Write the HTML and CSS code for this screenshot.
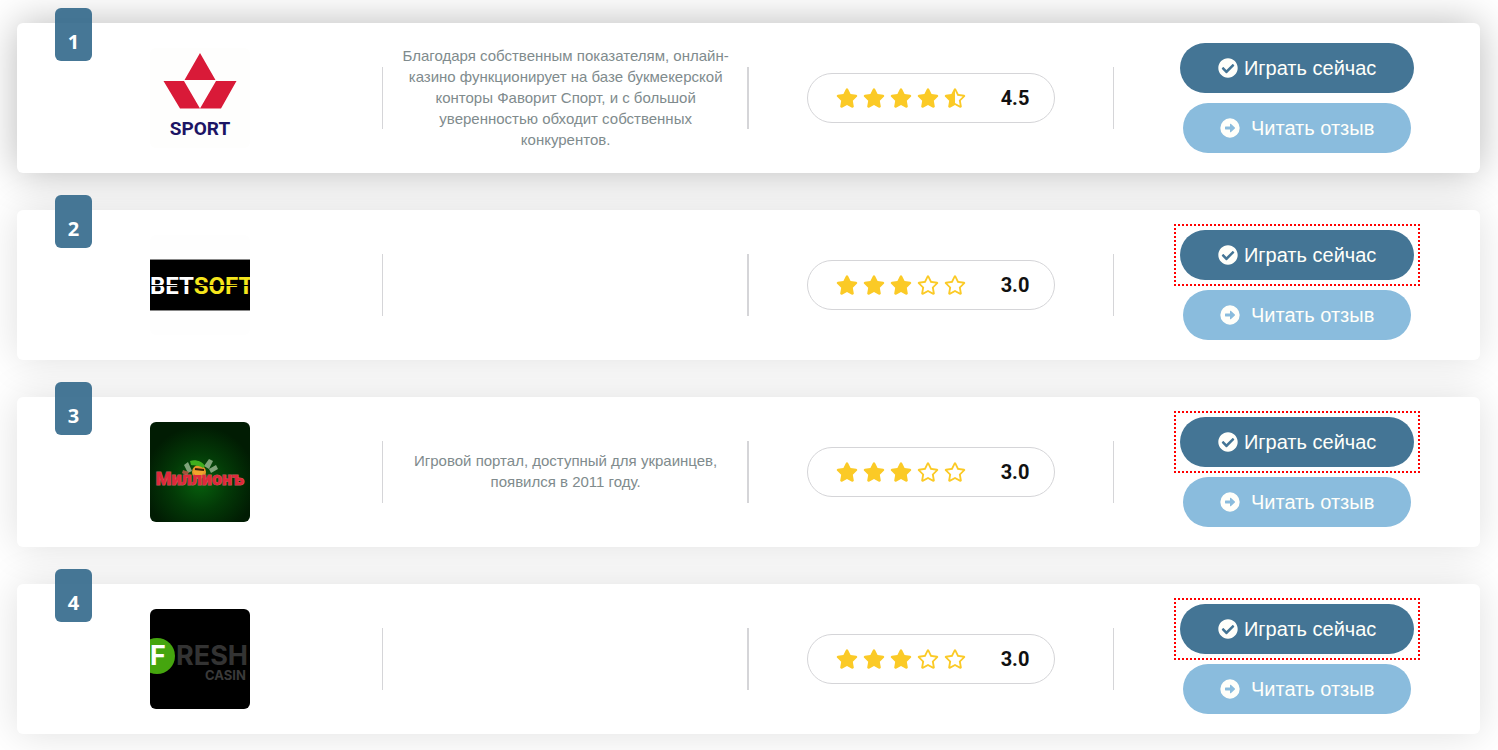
FILE: index.html
```html
<!DOCTYPE html>
<html lang="ru">
<head>
    <meta charset="UTF-8">
    <meta name="viewport" content="width=device-width, initial-scale=1.0">
    <title>Рейтинг казино</title>
    <link rel="stylesheet" href="styles.css">
</head>
<body>
    <!-- Shared icons -->
    <svg class="sprite" aria-hidden="true">
        <symbol id="star" viewBox="0 0 576 512">
            <path d="M259.3 17.8L194 150.2 47.9 171.5c-26.2 3.8-36.7 36.1-17.7 54.6l105.7 103-25 145.5c-4.5 26.3 23.2 46 46.4 33.7L288 439.6l130.7 68.7c23.2 12.2 50.9-7.4 46.4-33.7l-25-145.5 105.7-103c19-18.5 8.5-50.8-17.7-54.6L382 150.2 316.7 17.8c-11.7-23.6-45.6-23.9-57.4 0z"/>
        </symbol>
        <symbol id="star-empty" viewBox="0 0 576 512">
            <path d="M528.1 171.5L382 150.2 316.7 17.8c-11.7-23.6-45.6-23.9-57.4 0L194 150.2 47.9 171.5c-26.2 3.8-36.7 36.1-17.7 54.6l105.7 103-25 145.5c-4.5 26.3 23.2 46 46.4 33.7L288 439.6l130.7 68.7c23.2 12.2 50.9-7.4 46.4-33.7l-25-145.5 105.7-103c19-18.5 8.5-50.8-17.7-54.6zM388.6 312.3l23.7 138.4L288 385.4l-124.3 65.3 23.7-138.4-100.6-98 139-20.2 62.2-126 62.2 126 139 20.2-100.6 98z"/>
        </symbol>
        <symbol id="star-half" viewBox="0 0 576 512">
            <path d="M528.1 171.5L382 150.2 316.7 17.8c-11.7-23.6-45.6-23.9-57.4 0L194 150.2 47.9 171.5c-26.2 3.8-36.7 36.1-17.7 54.6l105.7 103-25 145.5c-4.5 26.3 23.2 46 46.4 33.7L288 439.6l130.7 68.7c23.2 12.2 50.9-7.4 46.4-33.7l-25-145.5 105.7-103c19-18.5 8.5-50.8-17.7-54.6zM388.6 312.3l23.7 138.4L288 385.4V68.1l62.2 126 139 20.2-100.6 98z"/>
        </symbol>
        <symbol id="check" viewBox="0 0 512 512">
            <path d="M504 256c0 136.967-111.033 248-248 248S8 392.967 8 256 119.033 8 256 8s248 111.033 248 248zM227.314 387.314l184-184c6.248-6.248 6.248-16.379 0-22.627l-22.627-22.627c-6.248-6.249-16.379-6.249-22.628 0L216 308.118l-70.059-70.059c-6.248-6.248-16.379-6.248-22.628 0l-22.627 22.627c-6.248 6.248-6.248 16.379 0 22.627l104 104c6.249 6.249 16.379 6.249 22.628.001z"/>
        </symbol>
        <symbol id="arrow" viewBox="0 0 512 512">
            <path fill-rule="evenodd" d="M256 8a248 248 0 1 0 0 496a248 248 0 1 0 0-496zM140 220h116v-60c0-14 12-18 20-10l104 96c6 6 6 14 0 20l-104 96c-8 8-20 4-20-10v-60H140c-7 0-12-5-12-12v-48c0-7 5-12 12-12z"/>
        </symbol>
    </svg>

    <main class="rating-list">
        <article class="card card-top">
            <span class="badge">1</span>
            <div class="col">
                <svg class="logo" viewBox="0 0 100 100" role="img" aria-label="Sport">
                    <rect width="100" height="100" fill="#fefefd"/>
                    <path fill="#d91a38" d="M50 5l15.500 27h-31zM13.500 33h20.500l16 27.500H30zM66 33h20.500L71 60.500H50z"/>
                    <text x="50" y="87" class="logo-sport">SPORT</text>
                </svg>
            </div>
            <div class="col">
                <p class="about">Благодаря собственным показателям, онлайн-казино функционирует на базе букмекерской конторы Фаворит Спорт, и с большой уверенностью обходит собственных конкурентов.</p>
            </div>
            <div class="col">
                <div class="score">
                    <span class="stars">
                        <svg><use href="#star"/></svg>
                        <svg><use href="#star"/></svg>
                        <svg><use href="#star"/></svg>
                        <svg><use href="#star"/></svg>
                        <svg><use href="#star-half"/></svg>
                    </span>
                    <b>4.5</b>
                </div>
            </div>
            <div class="col actions">
                <a class="btn btn-play" href="#"><svg><use href="#check"/></svg>Играть сейчас</a>
                <a class="btn btn-review" href="#"><svg><use href="#arrow"/></svg>Читать отзыв</a>
            </div>
        </article>

        <article class="card">
            <span class="badge">2</span>
            <div class="col">
                <svg class="logo" viewBox="0 0 100 100" role="img" aria-label="Betsoft">
                    <rect width="100" height="100" fill="#fefefe"/>
                    <rect y="24" width="100" height="52" fill="#888"/>
                    <rect y="25" width="100" height="50" fill="#000"/>
                    <text x="0" y="59" class="logo-betsoft">BET<tspan fill="#f5e61c">SOFT</tspan></text>
                    <path stroke="#000" d="M0 50.500h100"/>
                </svg>
            </div>
            <div class="col"></div>
            <div class="col">
                <div class="score">
                    <span class="stars">
                        <svg><use href="#star"/></svg>
                        <svg><use href="#star"/></svg>
                        <svg><use href="#star"/></svg>
                        <svg><use href="#star-empty"/></svg>
                        <svg><use href="#star-empty"/></svg>
                    </span>
                    <b>3.0</b>
                </div>
            </div>
            <div class="col actions">
                <div class="marked">
                    <a class="btn btn-play" href="#"><svg><use href="#check"/></svg>Играть сейчас</a>
                </div>
                <a class="btn btn-review" href="#"><svg><use href="#arrow"/></svg>Читать отзыв</a>
            </div>
        </article>

        <article class="card">
            <span class="badge">3</span>
            <div class="col">
                <svg class="logo" viewBox="0 0 100 100" role="img" aria-label="Миллионъ">
                    <defs>
                        <radialGradient id="glow" cy="60%" r="56%">
                            <stop offset="0" stop-color="#07600d"/>
                            <stop offset=".5" stop-color="#033a07"/>
                            <stop offset="1" stop-color="#011c03"/>
                        </radialGradient>
                    </defs>
                    <rect width="100" height="100" fill="url(#glow)"/>
                    <path fill="#7fa37a" d="M54 44l5-7 4 2-4 8zM59 47l7-4 2 4-7 4zM38 40l-4 3 4 8 4-2z"/>
                    <path fill="#a2543a" d="M33 48l6 2-2 4-5-3z"/>
                    <ellipse cx="49" cy="50" rx="7" ry="7" fill="#e8962a"/>
                    <path fill="#3fae1e" d="M40 39c5-2 12 0 15 5l-2 2c-4-3-8-2-12-3z"/>
                    <path stroke="#3a2008" stroke-width="2" d="M45 47l9 1"/>
                    <text x="50" y="63" class="logo-million">Миллионъ</text>
                    <path fill="#f0a52c" d="M43 49h11l-2 4h-7z"/>
                </svg>
            </div>
            <div class="col">
                <p class="about">Игровой портал, доступный для украинцев, появился в 2011 году.</p>
            </div>
            <div class="col">
                <div class="score">
                    <span class="stars">
                        <svg><use href="#star"/></svg>
                        <svg><use href="#star"/></svg>
                        <svg><use href="#star"/></svg>
                        <svg><use href="#star-empty"/></svg>
                        <svg><use href="#star-empty"/></svg>
                    </span>
                    <b>3.0</b>
                </div>
            </div>
            <div class="col actions">
                <div class="marked">
                    <a class="btn btn-play" href="#"><svg><use href="#check"/></svg>Играть сейчас</a>
                </div>
                <a class="btn btn-review" href="#"><svg><use href="#arrow"/></svg>Читать отзыв</a>
            </div>
        </article>

        <article class="card">
            <span class="badge">4</span>
            <div class="col">
                <svg class="logo" viewBox="0 0 100 100" role="img" aria-label="Fresh Casino">
                    <rect width="100" height="100" fill="#000"/>
                    <circle cx="7" cy="47" r="18" fill="#45a50e"/>
                    <text y="56" class="logo-fresh"><tspan x="0" fill="#fff">F</tspan><tspan x="26">RESH</tspan></text>
                    <text x="55" y="71" class="logo-casino">CASIN</text>
                </svg>
            </div>
            <div class="col"></div>
            <div class="col">
                <div class="score">
                    <span class="stars">
                        <svg><use href="#star"/></svg>
                        <svg><use href="#star"/></svg>
                        <svg><use href="#star"/></svg>
                        <svg><use href="#star-empty"/></svg>
                        <svg><use href="#star-empty"/></svg>
                    </span>
                    <b>3.0</b>
                </div>
            </div>
            <div class="col actions">
                <div class="marked">
                    <a class="btn btn-play" href="#"><svg><use href="#check"/></svg>Играть сейчас</a>
                </div>
                <a class="btn btn-review" href="#"><svg><use href="#arrow"/></svg>Читать отзыв</a>
            </div>
        </article>
    </main>
</body>
</html>
```
FILE: styles.css
```css
* {
    margin: 0;
    padding: 0;
    box-sizing: border-box;
}

body {
    background-color: #fff;
    font-family: Roboto, "Liberation Sans", sans-serif;
}

.sprite {
    display: none;
}

.rating-list {
    display: flex;
    flex-direction: column;
    gap: 37px;
    padding: 23px 18px 16px 17px;
}

.card {
    position: relative;
    display: grid;
    grid-template-columns: repeat(4, 1fr);
    min-height: 150px;
    padding: 20px 0;
    background-color: #fff;
    border-radius: 6px;
    box-shadow: 0 0 40px rgba(0,0,0,0.13);
}

.card-top {
    box-shadow: 0 0 40px rgba(0,0,0,0.28);
}

.badge {
    position: absolute;
    top: -15px;
    left: 38px;
    width: 37px;
    padding: 22px 0 7px;
    background-color: rgba(50,104,139,0.9);
    border-radius: 6px;
    color: #fff;
    font-family: "Open Sans", sans-serif;
    font-size: 20px;
    font-weight: 700;
    line-height: 24px;
    text-align: center;
}

.col {
    position: relative;
    display: flex;
    align-items: center;
    justify-content: center;
}

/* short divider between columns */
.col:not(:last-child)::after {
    content: "";
    position: absolute;
    right: 0;
    width: 1px;
    height: 62px;
    background-color: #d5d5d8;
}

.col:nth-of-type(2)::after {
    width: 2px;
}

.logo {
    width: 100px;
    height: 100px;
    border-radius: 6px;
}

.logo-sport {
    fill: #1c1464;
    font-size: 19px;
    font-weight: 700;
    text-anchor: middle;
}

.logo-betsoft {
    fill: #fff;
    font-size: 24px;
    font-weight: 700;
}

.logo-million {
    fill: #e0283a;
    stroke: #b9605c;
    stroke-width: 1px;
    paint-order: stroke;
    font-size: 18px;
    font-weight: 900;
    text-anchor: middle;
}

.logo-fresh {
    fill: #333;
    font-family: Inter, sans-serif;
    font-size: 27px;
    font-weight: 700;
}

.logo-casino {
    fill: #3a3a3a;
    font-family: Inter, sans-serif;
    font-size: 13px;
    font-weight: 700;
}

.about {
    padding: 0 16px 2px;
    color: #808b8d;
    font-family: "Liberation Sans", Arial, sans-serif;
    font-size: 15px;
    line-height: 21px;
    text-align: center;
}

.score {
    display: flex;
    align-items: center;
    justify-content: space-between;
    width: 248px;
    height: 50px;
    padding: 0 25px 0 28px;
    border: 1px solid #d5d5d8;
    border-radius: 25px;
    font-size: 20px;
}

.score b {
    color: #111;
    font-weight: 700;
}

.stars {
    display: flex;
    gap: 5px;
}

.stars svg {
    width: 22px;
    height: 20px;
    fill: #fbca26;
}

.actions {
    flex-direction: column;
    gap: 10px;
}

.btn {
    display: flex;
    align-items: center;
    height: 50px;
    border-radius: 25px;
    color: #fffffa;
    font-family: "Liberation Sans", Arial, sans-serif;
    font-size: 20px;
    text-decoration: none;
}

.btn svg {
    width: 20px;
    height: 20px;
    fill: #fffffa;
}

.btn-play {
    gap: 6px;
    padding: 0 38px;
    background-color: #447595;
}

.btn-review {
    gap: 11px;
    padding: 0 37px;
    background-color: #8abcdd;
}

.btn:hover {
    opacity: 0.9;
}

.marked {
    outline: 2px dotted #f00;
    outline-offset: 4px;
}
```
